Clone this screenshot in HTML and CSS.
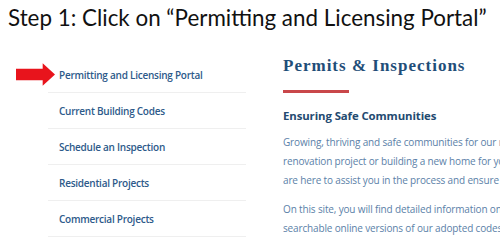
FILE: index.html
```html
<!DOCTYPE html>
<html lang="en">
	<head>
		<meta charset="utf-8" />
		<link rel="stylesheet" href="styles.css">
	</head>
	<body>
		<h1 class="step">Step 1: Click on &ldquo;Permitting and Licensing Portal&rdquo;</h1>
		<div class="page flex row nowrap">
			<div class="sidebar">
				<svg class="pointer" viewBox="0 0 38 22">
					<path d="M0 5.5h26V0l12 11-12 11v-5.5H0z"/>
				</svg>
				<ul class="side-nav">
					<li><a href="#">Permitting and Licensing Portal</a></li>
					<li><a href="#">Current Building Codes</a></li>
					<li><a href="#">Schedule an Inspection</a></li>
					<li><a href="#">Residential Projects</a></li>
					<li><a href="#">Commercial Projects</a></li>
				</ul>
			</div>
			<div class="content">
				<h2 class="title">Permits &amp; Inspections</h2>
				<div class="rule"></div>
				<h3 class="subtitle">Ensuring Safe Communities</h3>
				<p>Growing, thriving and safe communities for our residents is our goal. Whether<br />
				renovation project or building a new home for your family, the Building Department<br />
				are here to assist you in the process and ensure that every project is safe.</p>
				<p>On this site, you will find detailed information on permits, inspections and<br />
				searchable online versions of our adopted codes and ordinances.</p>
			</div>
		</div>
	</body>
</html>
```

FILE: styles.css
```css
body {
	margin: 0;
	background-color: #fff;
	overflow: hidden;
}

.flex {
	display: flex;
}

.flex.row {
	flex-direction: row;
}

.flex.nowrap {
	flex-wrap: nowrap;
}

.step {
	margin: 0;
	padding: 4px 0 0 8px;
	height: 52px;
	box-sizing: border-box;
	font-family: Lato, "Open Sans", sans-serif;
	font-weight: normal;
	font-size: 22.4px;
	color: #111;
	white-space: nowrap;
}

.page {
	font-family: "Open Sans", sans-serif;
}

.sidebar {
	position: relative;
	flex: 0 0 283px;
	padding: 5px 0 0 48px;
	box-sizing: border-box;
}

.pointer {
	position: absolute;
	left: 16px;
	top: 11px;
	width: 39px;
	height: 23px;
	fill: #e8141c;
}

.side-nav {
	list-style: none;
	margin: 0;
	padding: 0;
	width: 198px;
}

.side-nav li {
	height: 36px;
	border-bottom: 1px solid #efefef;
	box-sizing: border-box;
	display: flex;
	align-items: center;
	padding-left: 11px;
}

.side-nav a {
	font-size: 10px;
	font-weight: 600;
	letter-spacing: -0.25px;
	color: #2d5a8a;
	text-decoration: none;
}

.content {
	flex: 1;
	overflow: hidden;
	white-space: nowrap;
}

.title {
	margin: 4px 0 0;
	font-family: "Liberation Serif", serif;
	font-size: 17px;
	letter-spacing: 1px;
	color: #1f4e79;
}

.rule {
	width: 66px;
	height: 3px;
	margin-top: 14px;
	background-color: #c9474a;
}

.subtitle {
	margin: 15px 0 0;
	font-size: 11.4px;
	font-weight: 700;
	letter-spacing: -0.1px;
	color: #234a70;
}

.content p {
	margin: 10px 0 0;
	font-size: 10px;
	line-height: 19px;
	letter-spacing: -0.15px;
	color: #5b7fa8;
}
```
